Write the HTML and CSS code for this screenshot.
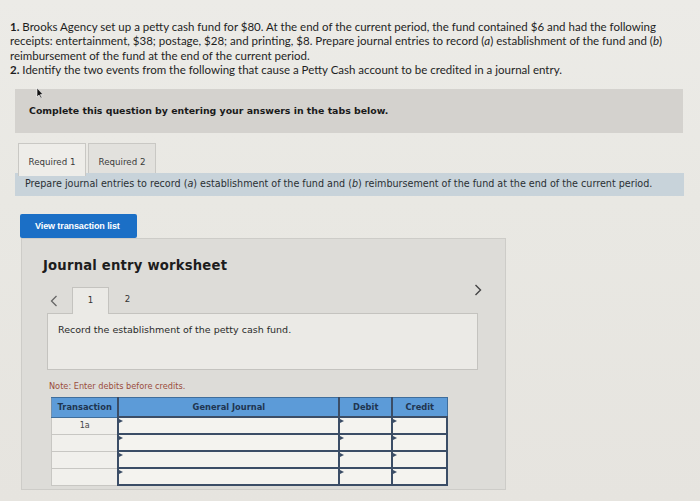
FILE: index.html
```html
<!DOCTYPE html>
<html lang="en">
<head>
<meta charset="utf-8">
<title>Petty cash – journal entry</title>
<link rel="stylesheet" href="styles.css">
</head>
<body>
<div class="page">
  <div class="question">
    <p><b>1.</b> Brooks Agency set up a petty cash fund for $80. At the end of the current period, the fund contained $6 and had the following receipts: entertainment, $38; postage, $28; and printing, $8. Prepare journal entries to record (<i>a</i>) establishment of the fund and (<i>b</i>) reimbursement of the fund at the end of the current period.</p>
    <p><b>2.</b> Identify the two events from the following that cause a Petty Cash account to be credited in a journal entry.</p>
  </div>

  <svg class="pointer" width="8" height="11" viewBox="0 0 8 11"><path d="M1 0 L1 9 L3 7 L5 10.5 L6 10 L4.3 6.6 L7 6.5 Z" fill="#111" stroke="#fff" stroke-width="0.6"/></svg>

  <div class="instructions">Complete this question by entering your answers in the tabs below.</div>

  <div class="req-tabs">
    <div class="req-tab active">Required 1</div>
    <div class="req-tab">Required 2</div>
  </div>
  <div class="req-band">Prepare journal entries to record (<i>a</i>) establishment of the fund and (<i>b</i>) reimbursement of the fund at the end of the current period.</div>

  <button class="view-btn">View transaction list</button>

  <section class="worksheet">
    <h2>Journal entry worksheet</h2>
    <div class="ws-nav">
      <span class="arrow prev">
        <svg width="8" height="12" viewBox="0 0 8 12"><path d="M6.5 1 L1.5 6 L6.5 11" fill="none" stroke="#666" stroke-width="1.3"/></svg>
      </span>
      <span class="ws-tab active">1</span>
      <span class="ws-tab">2</span>
      <span class="arrow next">
        <svg width="8" height="12" viewBox="0 0 8 12"><path d="M1.5 1 L6.5 6 L1.5 11" fill="none" stroke="#444" stroke-width="1.4"/></svg>
      </span>
    </div>
    <div class="ws-box">Record the establishment of the petty cash fund.</div>
    <p class="note">Note: Enter debits before credits.</p>
    <table class="journal">
      <thead>
        <tr><th class="c-tr">Transaction</th><th class="c-gj">General Journal</th><th class="c-dr">Debit</th><th class="c-cr">Credit</th></tr>
      </thead>
      <tbody>
        <tr><td class="c-tr">1a</td><td class="inp"></td><td class="inp"></td><td class="inp"></td></tr>
        <tr><td class="c-tr"></td><td class="inp"></td><td class="inp"></td><td class="inp"></td></tr>
        <tr><td class="c-tr"></td><td class="inp"></td><td class="inp"></td><td class="inp"></td></tr>
        <tr><td class="c-tr"></td><td class="inp"></td><td class="inp"></td><td class="inp"></td></tr>
      </tbody>
    </table>
  </section>
</div>
</body>
</html>
```

FILE: styles.css
```css
* { box-sizing: border-box; }

html, body {
  margin: 0;
  padding: 0;
}

body {
  width: 700px;
  height: 501px;
  overflow: hidden;
  background: linear-gradient(180deg, #ecebe7 0%, #e9e8e3 40%, #e6e4df 100%);
  font-family: "DejaVu Sans", Verdana, sans-serif;
  color: #222;
}

.page {
  position: relative;
  padding: 20px 0 0 0;
}

.question {
  padding: 0 20px 0 10px;
  font-family: "Lato", "Open Sans", sans-serif;
  font-size: 11.5px;
  line-height: 14.4px;
  color: #1e1e1e;
}

.question p { margin: 0; }
.question b { font-weight: 700; }

.pointer {
  position: absolute;
  left: 36px;
  top: 88px;
}

.instructions {
  margin: 11px 17px 0 15px;
  height: 44px;
  background: #d4d2ce;
  padding: 16px 0 0 14px;
  font-size: 9.4px;
  font-weight: bold;
  color: #1a1a1a;
}

.req-tabs {
  display: flex;
  gap: 2px;
  margin: 10px 0 0 18px;
  position: relative;
  z-index: 1;
}

.req-tab {
  width: 68px;
  height: 30px;
  border: 1px solid #c9c8c4;
  border-bottom: none;
  background: #e2e1dd;
  font-size: 8.7px;
  color: #3a3a3a;
  text-align: center;
  padding-top: 13px;
}

.req-tab.active {
  background: #eeede9;
  height: 33px;
  margin-bottom: -3px;
}

.req-band {
  margin: 0 16px 0 15px;
  height: 23px;
  background: #c8d3da;
  font-size: 9.6px;
  color: #2a2f33;
  padding: 5px 0 0 10px;
}

.view-btn {
  display: block;
  margin: 18px 0 0 20px;
  width: 117px;
  height: 24px;
  border: none;
  border-radius: 2px;
  background: #1b6fc6;
  color: #fff;
  font-family: "Liberation Sans", Arial, sans-serif;
  font-weight: bold;
  font-size: 9px;
  text-align: left;
  padding: 0 0 0 15px;
  letter-spacing: -0.1px;
}

.worksheet {
  margin: 0 0 0 21px;
  width: 485px;
  height: 252px;
  background: #dddcd8;
  border: 1px solid #cdccc8;
  padding: 17px 27px 0 25px;
}

.worksheet h2 {
  margin: 0 0 0 -4px;
  font-size: 13.2px;
  font-weight: bold;
  color: #1d1d1d;
  line-height: 20px;
  letter-spacing: 0.2px;
}

.ws-nav {
  display: flex;
  align-items: flex-end;
  height: 26px;
  margin-top: 11px;
  position: relative;
}

.arrow {
  display: flex;
}

.arrow.prev {
  margin: 0 14px 6px 3px;
}

.arrow.next {
  position: absolute;
  right: -4px;
  top: -3px;
}

.ws-tab {
  width: 37px;
  height: 26px;
  font-size: 8.6px;
  color: #333;
  text-align: center;
  padding-top: 7px;
}

.ws-tab.active {
  background: #ebeae6;
  border: 1px solid #c4c3bf;
  border-bottom: none;
  height: 27px;
  margin-bottom: -1px;
  position: relative;
  z-index: 1;
}

.ws-box {
  height: 57px;
  background: #ebeae6;
  border: 1px solid #c4c3bf;
  padding: 10px 0 0 10px;
  font-size: 9.5px;
  color: #2a2a2a;
}

.note {
  margin: 11px 0 0 2px;
  font-size: 8.2px;
  color: #9a4c3c;
  line-height: 11px;
}

.journal {
  margin: 5px 0 0 4px;
  width: 397px;
  border-collapse: collapse;
  font-size: 8.3px;
}

.journal th {
  background: #5c9bd8;
  color: #1f3550;
  font-weight: bold;
  height: 20px;
  border: 1px solid #3f6e9c;
  border-left: 2px solid #3b4d66;
  padding: 0;
}

.journal th.c-tr { border-left: 1px solid #6f8fae; }

.c-tr { width: 67px; }
.c-gj { width: 222px; }
.c-dr { width: 53px; }
.c-cr { width: 55px; }

.journal td {
  height: 17px;
  padding: 0;
  background: #f1f0ec;
}

.journal td.c-tr {
  border: 1px solid #c8c7c3;
  text-align: center;
  color: #444;
  font-size: 8px;
  vertical-align: top;
  padding-top: 3px;
}

.journal td.inp {
  border: 2px solid #3b4d66;
  position: relative;
  background: #f4f3ef;
}

.journal td.inp::before {
  content: "";
  position: absolute;
  left: 0;
  top: 1px;
  border-left: 4px solid #3b4d66;
  border-top: 2px solid transparent;
  border-bottom: 2px solid transparent;
}
```
